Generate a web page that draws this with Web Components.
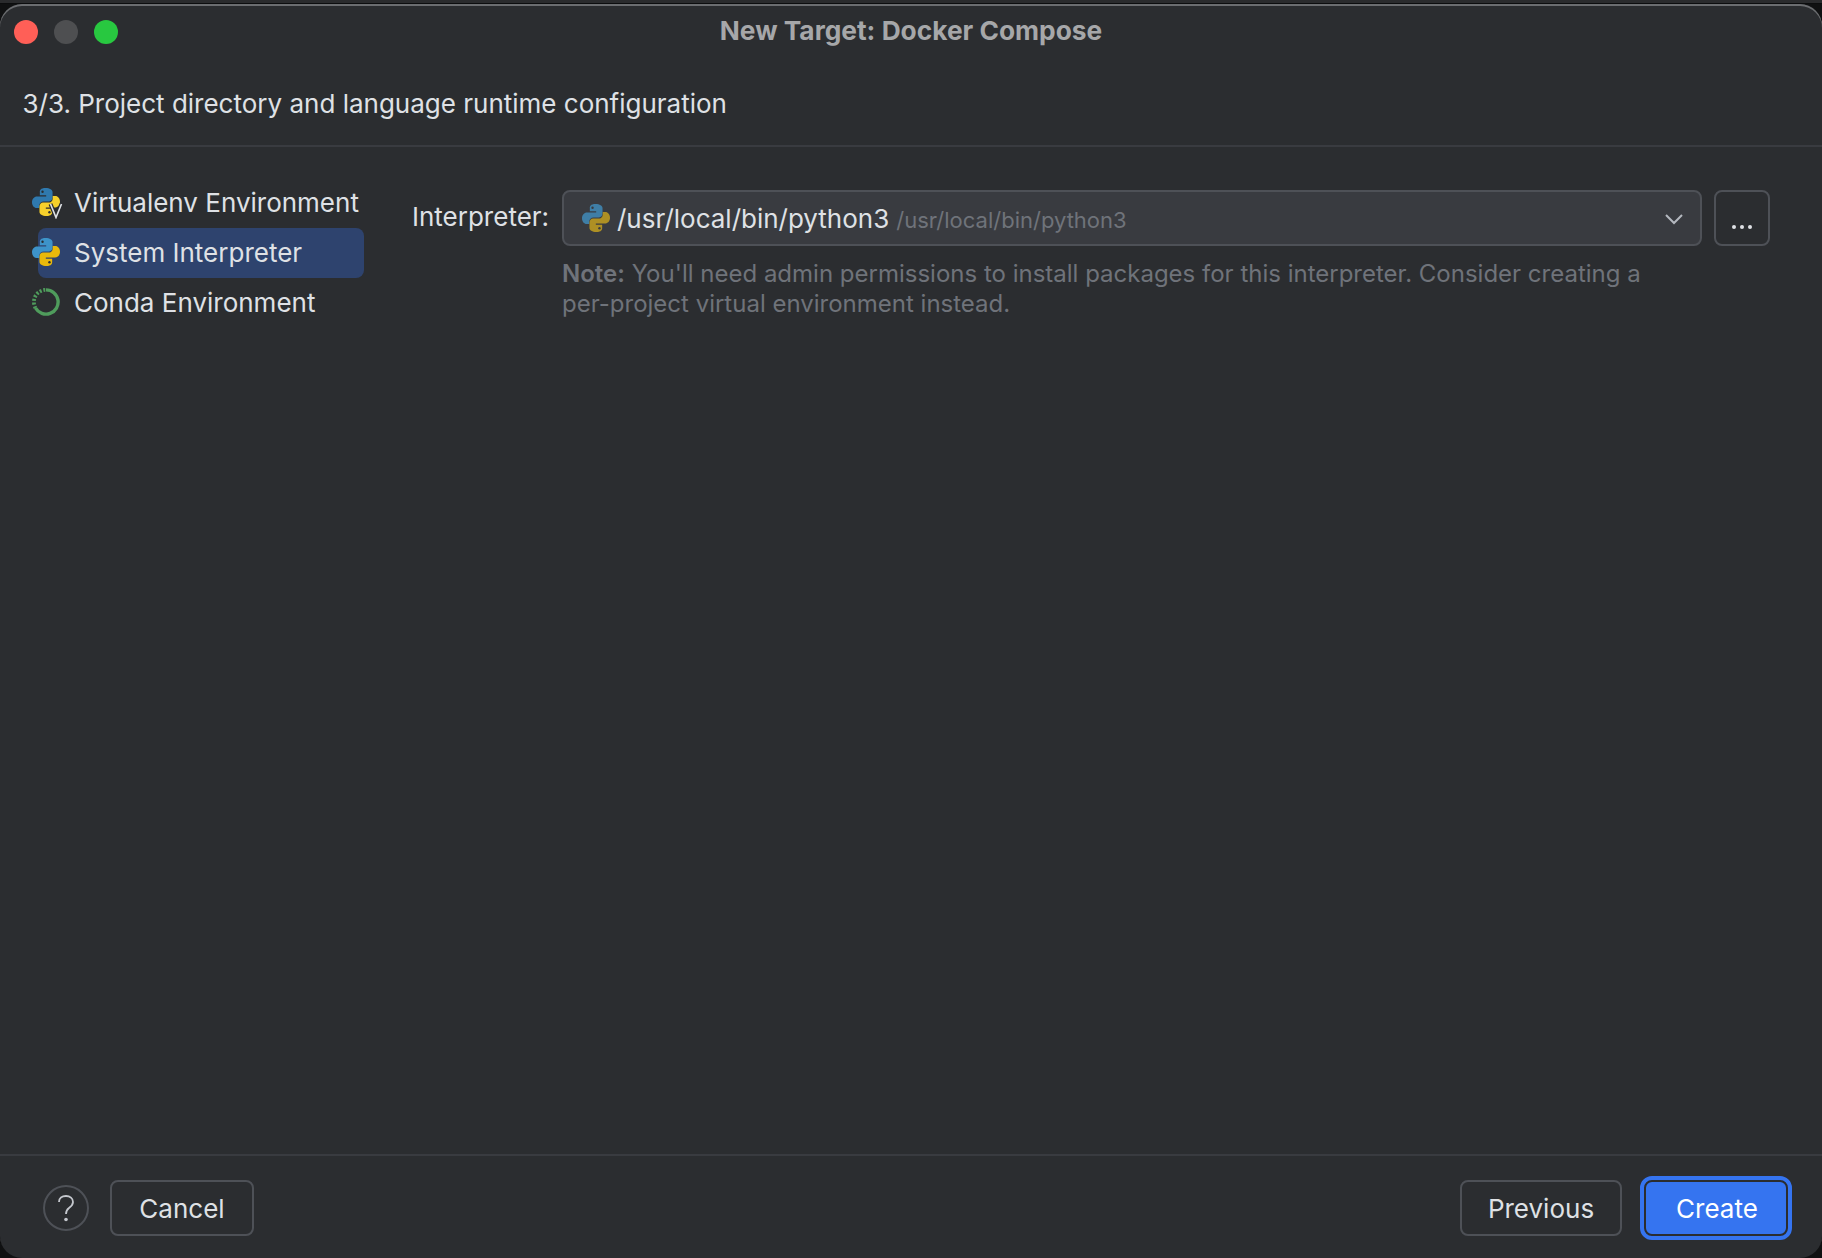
<!DOCTYPE html>
<html>
<head>
<meta charset="utf-8">
<title>New Target: Docker Compose</title>
<style>
  html, body { margin: 0; height: 100%; background: #101112; overflow: hidden; }
  body { font-family: Inter, "Liberation Sans", sans-serif; color: #dfe1e5; }
  .behind { height: 3px; background: #2a2b2d; border-bottom: 1px solid #0c0d0e; box-sizing: content-box; }
</style>
</head>
<body>
<template id="python-svg">
  <svg viewBox="1 2 30 28" width="28" height="28" preserveAspectRatio="none">
    <path fill="var(--py-blue, #3d93c9)" d="M15.600 2C9.900 2 9.400 4.400 9.400 6V9.200H16.200V10.400H6.400C3.300 10.400 1 12.900 1 16.200S3.200 22 6 22H8.800V19.600C8.800 17 10.600 15.400 13.600 15.400H19.200C21.400 15.400 23 13.600 23 11.500V6C23 3.700 20 2 15.600 2Z"/>
    <path fill="var(--py-yellow, #e9b90b)" d="M16.400 30C22.100 30 22.600 27.600 22.600 26V22.800H15.800V21.600H25.600C28.700 21.600 31 19.100 31 15.800S28.800 10 26 10H23.200V12.400C23.200 14.900 21.400 16.600 18.400 16.600H12.800C10.600 16.600 9 18.400 9 20.500V26C9 28.300 12 30 16.400 30Z"/>
    <circle cx="12.300" cy="5.800" r="1.300" fill="var(--py-eye, #2b2d30)"/>
    <circle cx="19.700" cy="26.200" r="1.300" fill="var(--py-eye, #2b2d30)"/>
  </svg>
</template>

<script>
const pyIcon = () => document.getElementById('python-svg').innerHTML

class WindowDots extends HTMLElement {
  constructor () {
    super()
    this.attachShadow({ mode: 'open' }).innerHTML = `
      <style>
        :host { display: flex; gap: 16px; }
        i { width: 24px; height: 24px; border-radius: 50%; display: block; }
      </style>
      <i style="background:#ff5f57"></i>
      <i style="background:#4e4f51"></i>
      <i style="background:#28c840"></i>
    `
  }
}

class TitleBar extends HTMLElement {
  constructor () {
    super()
    this.attachShadow({ mode: 'open' }).innerHTML = `
      <style>
        :host { display: grid; grid-template-columns: 1fr auto 1fr; align-items: center; height: 48px; padding: 0 14px; }
        .t { font-size: 26.3px; font-weight: 700; color: #a6a7a9; margin-top: -3px; }
      </style>
      <window-dots></window-dots>
      <div class="t"><slot></slot></div>
      <div></div>
    `
  }
}

class StepHeader extends HTMLElement {
  constructor () {
    super()
    this.attachShadow({ mode: 'open' }).innerHTML = `
      <style>
        :host { display: flex; align-items: center; height: 84px; padding: 5px 23px 0 22.500px; font-size: 26px; color: #dfe1e5; border-bottom: 2px solid #393b40; }
      </style>
      <slot></slot>
    `
  }
}

class SideItem extends HTMLElement {
  connectedCallback () {
    if (this.shadowRoot) return
    const kind = this.getAttribute('kind')
    let icon = pyIcon()
    if (kind === 'virtualenv') {
      icon = `<span class="w" style="--py-blue:#2f79ae;--py-yellow:#f6d02b">${pyIcon()}<svg class="v" viewBox="0 0 16 16" width="16" height="16"><path d="M2.500 1 8 14.500 13.500 1" fill="none" stroke="#2b2d30" stroke-width="4"/><path d="M2.500 1 8 14.500 13.500 1" fill="none" stroke="#dfe1e5" stroke-width="1.600"/></svg></span>`
    } else if (kind === 'conda') {
      icon = `<svg viewBox="0 0 28 28" width="28" height="28">
        <path d="M14 1.900A12.100 12.100 0 1 1 3.500 20" fill="none" stroke="#4f9c5c" stroke-width="3.400"/>
        <path d="M3.500 20A12.100 12.100 0 0 1 14 1.900" fill="none" stroke="#4f9c5c" stroke-width="3.800" stroke-dasharray="2 1.700"/>
      </svg>`
    }
    this.attachShadow({ mode: 'open' }).innerHTML = `
      <style>
        :host { display: flex; align-items: center; height: 50px; font-size: 26px; color: #dfe1e5; position: relative; padding-left: 42px; }
        :host([selected])::before { content: ""; position: absolute; left: 6px; right: 0; top: 0; bottom: 0; background: #2e436e; border-radius: 8px; }
        .ic { position: absolute; left: 0; top: 10px; width: 28px; height: 28px; }
        .ic svg { display: block; }
        .w { display: block; position: relative; }
        .ic svg.v { position: absolute; left: 16px; top: 15px; }
        .tx { position: relative; white-space: nowrap; margin-top: -2px; }
      </style>
      <span class="ic">${icon}</span>
      <span class="tx"><slot></slot></span>
    `
  }
}

class SideList extends HTMLElement {
  constructor () {
    super()
    this.attachShadow({ mode: 'open' }).innerHTML = `
      <style>:host { display: block; width: 332px; }</style>
      <slot></slot>
    `
  }
}

class ComboBox extends HTMLElement {
  constructor () {
    super()
    this.attachShadow({ mode: 'open' }).innerHTML = `
      <style>
        :host { display: flex; align-items: center; flex: 1; height: 56px; box-sizing: border-box; background: #393b40; border: 2px solid #4e5157; border-radius: 8px; padding: 0 17px 0 18px; gap: 7px; white-space: nowrap; --py-blue: #3f7ea6; --py-yellow: #ae9024; --py-eye: #393b40; }
        svg { display: block; flex: none; }
        .main { font-size: 26px; color: #dfe1e5; }
        .sub { font-size: 22px; color: #6f737a; margin-top: 4px; }
        .sp { flex: 1; }
      </style>
      ${pyIcon()}
      <span class="main"><slot></slot></span>
      <span class="sub"><slot name="sub"></slot></span>
      <span class="sp"></span>
      <svg viewBox="0 0 18 12" width="18" height="12" style="margin-top:2px"><path d="M1 2 9 10 17 2" fill="none" stroke="#b4b8bf" stroke-width="2"/></svg>
    `
  }
}

class DotsButton extends HTMLElement {
  constructor () {
    super()
    this.attachShadow({ mode: 'open' }).innerHTML = `
      <style>
        :host { display: flex; justify-content: center; gap: 4px; padding-top: 33px; box-sizing: border-box; width: 56px; height: 56px; border: 2px solid #4e5157; border-radius: 8px; }
        i { width: 4px; height: 4px; background: #dfe1e5; border-radius: 50%; display: block; }
      </style>
      <i></i><i></i><i></i>
    `
  }
}

class FormRow extends HTMLElement {
  constructor () {
    super()
    this.attachShadow({ mode: 'open' }).innerHTML = `
      <style>
        :host { display: flex; flex: 1; flex-direction: column; min-width: 0; margin-top: 12px; }
        .r { display: flex; align-items: center; gap: 12px; }
        .l { width: 138px; font-size: 26px; color: #dfe1e5; white-space: nowrap; margin-top: -3px; }
        .note { margin: 13px 0 0 150px; font-size: 24px; line-height: 30px; color: #6f737a; }
      </style>
      <div class="r">
        <span class="l"><slot name="label"></slot></span>
        <slot name="field"></slot>
      </div>
      <div class="note"><slot name="note"></slot></div>
    `
  }
}

class HelpButton extends HTMLElement {
  constructor () {
    super()
    this.attachShadow({ mode: 'open' }).innerHTML = `
      <style>
        :host { display: flex; width: 46px; height: 46px; box-sizing: border-box; border: 2px solid #4e5157; border-radius: 50%; align-items: center; justify-content: center; }
        svg { display: block; }
      </style>
      <svg viewBox="0 0 18 28" width="18" height="28"><path d="M2 8C2 4 5 2 9 2S16 4.500 16 8C16 11 14 12.500 12 14C10 15.500 9 16.500 9 20" fill="none" stroke="#c5c8ce" stroke-width="1.800"/><circle cx="9" cy="25.500" r="1.800" fill="#c5c8ce"/></svg>
    `
  }
}

class DialogButton extends HTMLElement {
  constructor () {
    super()
    this.attachShadow({ mode: 'open' }).innerHTML = `
      <style>
        :host { display: flex; align-items: center; justify-content: center; height: 56px; box-sizing: border-box; border: 2px solid #4e5157; border-radius: 8px; font-size: 26px; color: #dfe1e5; }
        :host([primary]) { background: #3574f0; border-color: #2b2d30; color: #fff; outline: 4px solid #3574f0; outline-offset: 0; padding-left: 2px; }
      </style>
      <slot></slot>
    `
  }
}

class DialogFooter extends HTMLElement {
  constructor () {
    super()
    this.attachShadow({ mode: 'open' }).innerHTML = `
      <style>
        :host { display: flex; align-items: center; height: 104px; border-top: 2px solid #393b40; padding: 2px 34px 0 43px; box-sizing: border-box; }
        .sp { flex: 1; }
        .left, .right { display: flex; align-items: center; }
        .left { gap: 21px; }
        .right { gap: 22px; }
      </style>
      <div class="left"><slot name="left"></slot></div>
      <div class="sp"></div>
      <div class="right"><slot name="right"></slot></div>
    `
  }
}

class DialogWindow extends HTMLElement {
  constructor () {
    super()
    this.attachShadow({ mode: 'open' }).innerHTML = `
      <style>
        :host { display: flex; flex-direction: column; height: 1254px; box-sizing: border-box; background: #2b2d30; border-radius: 22px; box-shadow: inset 0 2px 0 #6b6d70; }
        .top { padding-top: 4px; }
        .body { flex: 1; display: flex; gap: 48px; padding: 31px 52px 0 32px; min-height: 0; }
      </style>
      <div class="top"><slot name="title"></slot></div>
      <slot name="header"></slot>
      <div class="body"><slot></slot></div>
      <slot name="footer"></slot>
    `
  }
}

customElements.define('window-dots', WindowDots)
customElements.define('title-bar', TitleBar)
customElements.define('step-header', StepHeader)
customElements.define('side-item', SideItem)
customElements.define('side-list', SideList)
customElements.define('combo-box', ComboBox)
customElements.define('dots-button', DotsButton)
customElements.define('form-row', FormRow)
customElements.define('help-button', HelpButton)
customElements.define('dialog-button', DialogButton)
customElements.define('dialog-footer', DialogFooter)
customElements.define('dialog-window', DialogWindow)
</script>

<div class="behind"></div>
<dialog-window>
  <title-bar slot="title">New Target: Docker Compose</title-bar>
  <step-header slot="header">3/3. Project directory and language runtime configuration</step-header>
  <side-list>
    <side-item kind="virtualenv">Virtualenv Environment</side-item>
    <side-item kind="system" selected>System Interpreter</side-item>
    <side-item kind="conda">Conda Environment</side-item>
  </side-list>
  <form-row>
    <span slot="label">Interpreter:</span>
    <combo-box slot="field">/usr/local/bin/python3<span slot="sub">/usr/local/bin/python3</span></combo-box>
    <dots-button slot="field"></dots-button>
    <span slot="note"><b style="font-weight:600">Note:</b> You'll need admin permissions to install packages for this interpreter. Consider creating a<br>per-project virtual environment instead.</span>
  </form-row>
  <dialog-footer slot="footer">
    <help-button slot="left"></help-button>
    <dialog-button slot="left" style="width:144px">Cancel</dialog-button>
    <dialog-button slot="right" style="width:162px">Previous</dialog-button>
    <dialog-button slot="right" primary style="width:144px">Create</dialog-button>
  </dialog-footer>
</dialog-window>
</body>
</html>
